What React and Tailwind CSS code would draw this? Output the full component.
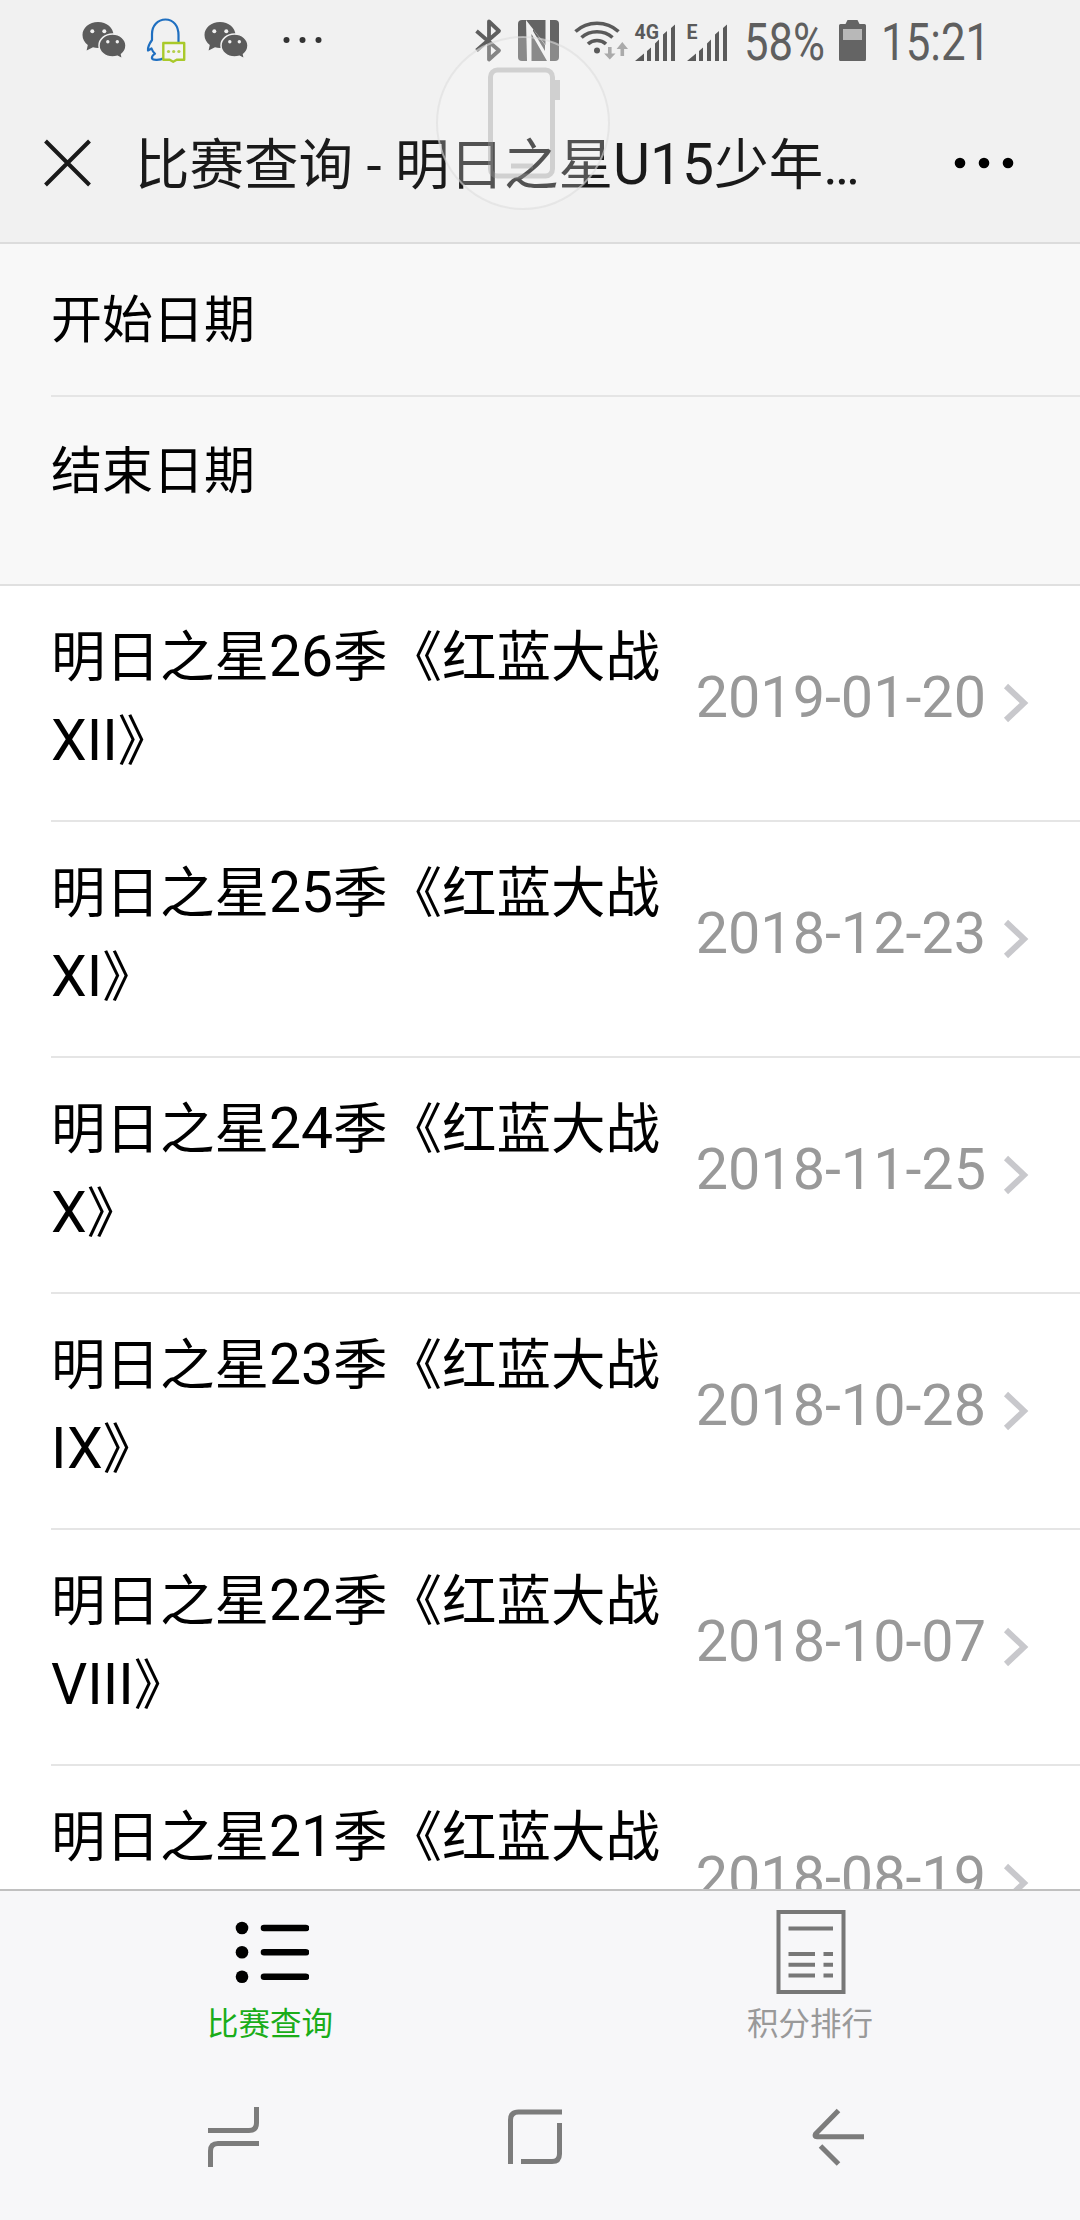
import { useState } from "react";

const matches = [
  { id: 26, title: "明日之星26季《红蓝大战XII》", date: "2019-01-20" },
  { id: 25, title: "明日之星25季《红蓝大战XI》", date: "2018-12-23" },
  { id: 24, title: "明日之星24季《红蓝大战X》", date: "2018-11-25" },
  { id: 23, title: "明日之星23季《红蓝大战IX》", date: "2018-10-28" },
  { id: 22, title: "明日之星22季《红蓝大战VIII》", date: "2018-10-07" },
  { id: 21, title: "明日之星21季《红蓝大战", date: "2018-08-19" },
];

// latin runs are set a little larger than the chinese around them
const Mixed = ({ text, latin }) =>
  text.split(/([A-Za-z0-9]+)/).map((part, i) =>
    i % 2 ? (
      <span key={i} className={latin}>
        {part}
      </span>
    ) : (
      part
    )
  );

const WechatIcon = () => (
  <svg width="52" height="80" viewBox="78 0 52 80" fill="#5c5c5c">
    <path d="M98 22c-8.700 0-15.500 5.700-15.500 13 0 4 2 7.600 5.300 10l-1.200 5.500 6.400-3.200c1.600.4 3.300.6 5 .6 8.600 0 15.500-5.800 15.500-12.900S106.600 22 98 22z" />
    <circle cx="92.300" cy="31.300" r="2" fill="#f1f1f1" />
    <circle cx="104.300" cy="31.300" r="2" fill="#f1f1f1" />
    <path
      d="M112.500 34c-7.500 0-13.500 5.100-13.500 11.500S105 57 112.500 57c1.800 0 3.500-.3 5-.8l5 2.800-1-4.700c2.800-2.100 4.500-5.300 4.500-8.800 0-6.400-6-11.500-13.500-11.500z"
      stroke="#f1f1f1"
      strokeWidth="1.500"
    />
    <circle cx="107.800" cy="41.800" r="1.700" fill="#f1f1f1" />
    <circle cx="117.300" cy="41.800" r="1.700" fill="#f1f1f1" />
  </svg>
);

const QQIcon = () => (
  <svg width="48" height="80" viewBox="142 0 48 80" fill="none">
    <path
      d="M178.500 42V35c0-9-5-15.500-13-15.500S152 26 152 34v6c-2.500 3.500-4.500 7-4 10.500l3.500-2c.7 2 2 3.800 3.500 5.200-2 1.300-3.500 3-3 4.800 1 2 8 1.800 12-.500"
      stroke="#1f6fc0"
      strokeWidth="2.200"
      strokeLinejoin="round"
    />
    <path
      d="M163.300 43h20.900v16.800h-7.500l-3.500 2-3.500-2h-6.400z"
      fill="#f4f4f4"
      stroke="#a9c92a"
      strokeWidth="2.400"
      strokeLinejoin="round"
    />
    <g fill="#b4cf4b">
      <circle cx="168.500" cy="51.500" r="1.600" />
      <circle cx="173.700" cy="51.500" r="1.600" />
      <circle cx="178.900" cy="51.500" r="1.600" />
    </g>
  </svg>
);

const BluetoothIcon = () => (
  <svg width="36" height="80" viewBox="470 0 36 80" fill="none">
    <path
      d="M476.500 31L499 50.500 489 59.500V21.500L499 31 476.500 50.500"
      stroke="#5e5e5e"
      strokeWidth="3.800"
      strokeLinejoin="round"
    />
  </svg>
);

const NfcIcon = () => (
  <svg width="46" height="80" viewBox="516 0 46 80">
    <rect x="518" y="20" width="41" height="41" rx="4" fill="#646464" />
    <path
      d="M526 20L545.500 45V20H550V61H547L531.500 34V61H527z"
      fill="#f1f1f1"
    />
    <path d="M533 31L545 51V45L533 29z" fill="#646464" />
  </svg>
);

const WifiIcon = () => (
  <svg width="58" height="80" viewBox="572 0 58 80" fill="none">
    <g stroke="#5a5a5a" strokeWidth="3.600">
      <path d="M575.500 31.500c12-11 31-11 43 0" />
      <path d="M581.500 37.500c8.500-7.700 22.500-7.700 31 0" />
      <path d="M588 44c5-4.700 13-4.700 18 0" />
    </g>
    <circle cx="597" cy="50.500" r="3" fill="#5a5a5a" />
    <path
      d="M608 47h3.600v6.500h3.900l-5.700 6-5.700-6h3.900zM620.500 56h3.600v-7h3.900l-5.700-7-5.700 7h3.900z"
      fill="#aaa"
    />
  </svg>
);

const SignalIcon = ({ label }) => (
  <svg width="52" height="80" viewBox="632 0 52 80" fill="#5a5a5a">
    <path d="M635 61l9-7.500V61zM647 61V51l4-3.500V61zM655 61V43.500l4-4V61zM663 61V34.500l4-3.500V61zM671 61V28l4-3.500V61z" />
    <text
      x="634.500"
      y="38.500"
      fontSize="19.500"
      fontWeight="700"
      fontFamily="Roboto, sans-serif"
    >
      {label}
    </text>
  </svg>
);

const BatteryIcon = () => (
  <svg width="32" height="80" viewBox="836 0 32 80">
    <path
      d="M847.500 20h10l2 4h5q1.500 0 1.500 1.500v34q0 1.500-1.500 1.500h-24q-1.500 0-1.500-1.500v-34q0-1.500 1.500-1.500h5z"
      fill="#646464"
    />
    <rect x="843" y="29" width="19" height="11" fill="#b8b8b8" />
  </svg>
);

const StatusBar = () => (
  <div className="flex h-20 items-center pl-[78px] text-[51px] leading-[80px] text-[#5f5f5f]">
    <WechatIcon />
    <div className="ml-3">
      <QQIcon />
    </div>
    <div className="ml-2.5">
      <WechatIcon />
    </div>
    <svg className="ml-7" width="45" height="80" viewBox="280 0 45 80" fill="#333">
      <circle cx="286.500" cy="40" r="3" />
      <circle cx="302.500" cy="40" r="3" />
      <circle cx="318.500" cy="40" r="3" />
    </svg>
    <div className="ml-[145px] flex">
      <BluetoothIcon />
      <div className="ml-2.5 mr-2.5">
        <NfcIcon />
      </div>
      <WifiIcon />
      <div className="ml-0.5 flex">
        <SignalIcon label="4G" />
        <SignalIcon label="E" />
      </div>
    </div>
    <div className="ml-[8px] w-[92px] pt-[5px]">
      <span className="inline-block origin-left scale-x-[0.855]">58%</span>
    </div>
    <BatteryIcon />
    <div className="ml-[13px] w-[110px] pt-[5px]">
      <span className="inline-block origin-left scale-x-[0.86]">15:21</span>
    </div>
  </div>
);

// floating assistive button, sits over the header
const FloatingButton = () => (
  <svg
    className="absolute left-[430px] top-[30px]"
    width="186"
    height="186"
    viewBox="430 30 186 186"
    fill="none"
  >
    <circle
      cx="523"
      cy="123"
      r="86"
      fill="#fafafa"
      fillOpacity="0.25"
      stroke="#dedede"
      strokeOpacity="0.600"
      strokeWidth="2"
    />
    <g stroke="#999" strokeOpacity="0.380" strokeWidth="5">
      <rect x="490.500" y="70" width="62" height="106" rx="7" />
      <path d="M557.500 80v20M511 166h22" />
    </g>
  </svg>
);

const Header = () => (
  <div className="flex h-[164px] items-center border-b-2 border-[#dcdcdc] pl-[44px] pt-[3px]">
    <svg width="48" height="48" viewBox="0 0 48 48" stroke="#1a1a1a" strokeWidth="4">
      <path d="M1.500 2L45.500 46M45.500 2L1.500 46" />
    </svg>
    <h1 className="ml-[43px] whitespace-nowrap pt-[5px] text-[54.500px] leading-[80px] text-[#1a1a1a]">
      <Mixed text="比赛查询 - 明日之星U15少年…" latin="text-[57px]" />
    </h1>
    <svg className="ml-auto mr-[64px]" width="64" height="12" viewBox="952 158 64 12">
      <circle cx="960" cy="164" r="5.300" />
      <circle cx="984" cy="164" r="5.300" />
      <circle cx="1008" cy="164" r="5.300" />
    </svg>
  </div>
);

const MatchRow = ({ match }) => (
  <li className="ml-[51px] flex h-[236px] shrink-0 items-center border-b-2 border-[#e5e5e5] pr-[50px]">
    <p className="h-[166px] w-[620px] break-all pb-[10px] -mt-[10px] text-[54.500px] leading-[83px] text-black">
      <Mixed text={match.title} latin="text-[57px]" />
    </p>
    <span className="ml-auto pb-[10px] text-[57.500px] leading-[80px] text-[#999]">
      {match.date}
    </span>
    <svg className="ml-[16px]" width="28" height="42" viewBox="0 0 28 42" fill="none">
      <path d="M4 4L22 21 4 38" stroke="#c8c8cc" strokeWidth="6" />
    </svg>
  </li>
);

const ListIcon = () => (
  <svg width="76" height="66" viewBox="232 1919 76 66">
    <g>
      <circle cx="241" cy="1928" r="6.300" />
      <circle cx="241" cy="1952.300" r="6.300" />
      <circle cx="241" cy="1976.700" r="6.300" />
    </g>
    <path
      d="M263 1928h42M263 1952.300h42M263 1976.700h42"
      stroke="#000"
      strokeWidth="6.600"
      strokeLinecap="round"
    />
  </svg>
);

const RankIcon = () => (
  <svg width="70" height="84" viewBox="776.500 1910 70 84" fill="none" stroke="#777">
    <rect x="779" y="1912" width="65" height="80" strokeWidth="4" />
    <path
      d="M789 1928.500h44.500M789 1954h26.500M824 1954h9.500M789 1964.700h26.500M824 1964.700h9.500M789 1975.500h26.500M824 1975.500h9.500"
      strokeWidth="4"
    />
  </svg>
);

const tabs = [
  { key: "matches", label: "比赛查询", icon: ListIcon },
  { key: "ranking", label: "积分排行", icon: RankIcon },
];

const App = () => {
  const [active, setActive] = useState("matches");

  return (
    <div className="relative flex h-[2220px] w-[1080px] flex-col overflow-hidden bg-[#f1f1f1] font-[Roboto,'Noto_Sans_CJK_SC',sans-serif]">
      <StatusBar />
      <Header />
      <FloatingButton />

      <div className="flex h-[342px] flex-col border-b-2 border-[#e0e0e0] bg-[#f8f8f8] text-[51px] leading-[80px] text-black">
        <div className="ml-[51px] flex h-[153px] items-center border-b-2 border-[#e5e5e5] pt-[2px]">
          开始日期
        </div>
        <div className="ml-[51px] flex h-[150px] items-center">结束日期</div>
      </div>

      <ul className="flex h-[1303px] flex-col overflow-hidden bg-white">
        {matches.map((match) => (
          <MatchRow key={match.id} match={match} />
        ))}
      </ul>

      <div className="flex h-[168px] border-t-2 border-[#c0c0c0] bg-[#f7f7f9]">
        {tabs.map(({ key, label, icon: Icon }) => (
          <button
            key={key}
            onClick={() => setActive(key)}
            className="flex flex-1 flex-col items-center pt-[18px]"
          >
            <div className="ml-0.5 flex h-[86px] items-center">
              <Icon />
            </div>
            <span
              className={`mt-[8px] text-[31.500px] leading-[44px] ${
                active === key ? "text-[#1aad19]" : "text-[#999]"
              }`}
            >
              {label}
            </span>
          </button>
        ))}
      </div>

      <div className="flex flex-1 bg-[#f7f7f9] pl-[204px] pt-[3px]">
        <svg width="60" height="160" viewBox="204 2060 60 160" fill="none" stroke="#7c7c7c" strokeWidth="5">
          <path d="M208 2130.500h41q7.500 0 7.500-7.500v-16M210.500 2167v-16q0-7.500 7.500-7.500h41" />
        </svg>
        <svg className="ml-[241px]" width="60" height="160" viewBox="505 2060 60 160" fill="none" stroke="#7c7c7c" strokeWidth="5">
          <path d="M510.500 2164v-44q0-8 8-8h43.500M559.500 2123v31q0 7.500-7.500 7.500h-31" />
        </svg>
        <svg className="ml-[243px]" width="60" height="160" viewBox="808 2060 60 160" fill="none" stroke="#7c7c7c" strokeWidth="5">
          <path d="M838.500 2110.500l-23 23.500q-1.500 2.800 1.500 2.800h47M820.500 2146l18 18" strokeLinejoin="round" />
        </svg>
      </div>
    </div>
  );
};

export default App;
